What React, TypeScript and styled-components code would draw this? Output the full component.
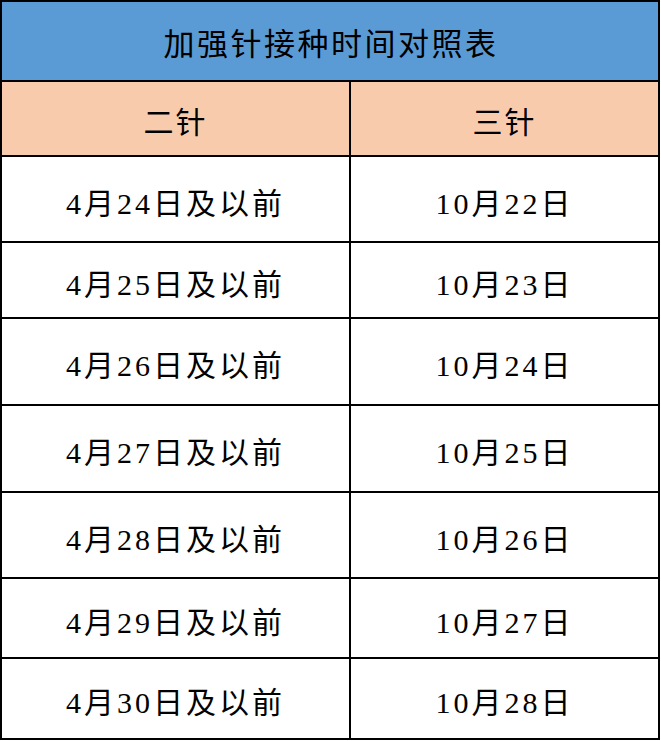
import { Fragment } from "react"
import styled, { createGlobalStyle } from "styled-components"

const GlobalStyle = createGlobalStyle`
    html, body {
        margin:0;
        padding:0;
        background:#fff;
    }
`

const rows = [
    { second: "4月24日及以前", third: "10月22日", h: 84 },
    { second: "4月25日及以前", third: "10月23日", h: 74 },
    { second: "4月26日及以前", third: "10月24日", h: 85 },
    { second: "4月27日及以前", third: "10月25日", h: 85 },
    { second: "4月28日及以前", third: "10月26日", h: 84 },
    { second: "4月29日及以前", third: "10月27日", h: 78 },
    { second: "4月30日及以前", third: "10月28日", h: 79 },
]

const StyledTable = styled.div<{ $rows: string }>`
    width:656px;
    padding:2px;
    background:#000;
    display:grid;
    grid-template-columns:347px 307px;
    grid-template-rows:${(p) => p.$rows};
    gap:2px;
    font-family:"Liberation Serif", "Noto Sans CJK SC", serif;
    color:#000;
`

const StyledTitle = styled.div`
    grid-column:1 / span 2;
    background:#5b9bd5;
    display:flex;
    align-items:center;
    justify-content:center;
    font-size:31px;
    letter-spacing:2.5px;
    padding-left:2px;
`

const StyledHead = styled.div`
    background:#f8cbad;
    display:flex;
    align-items:center;
    justify-content:center;
    font-size:30px;
    letter-spacing:2px;
    padding-top:2px;
`

const StyledCell = styled.div`
    background:#fff;
    display:flex;
    align-items:center;
    justify-content:center;
    font-size:30px;
    letter-spacing:3px;
    padding-top:3px;
`

const App = () => {
    const template = ["78px", "73px", ...rows.map((r) => r.h + "px")].join(" ")
    return (
        <>
            <GlobalStyle />
            <StyledTable $rows={template}>
                <StyledTitle>加强针接种时间对照表</StyledTitle>
                <StyledHead>二针</StyledHead>
                <StyledHead>三针</StyledHead>
                {rows.map((r) => (
                    <Fragment key={r.second}>
                        <StyledCell>{r.second}</StyledCell>
                        <StyledCell>{r.third}</StyledCell>
                    </Fragment>
                ))}
            </StyledTable>
        </>
    )
}

export default App
